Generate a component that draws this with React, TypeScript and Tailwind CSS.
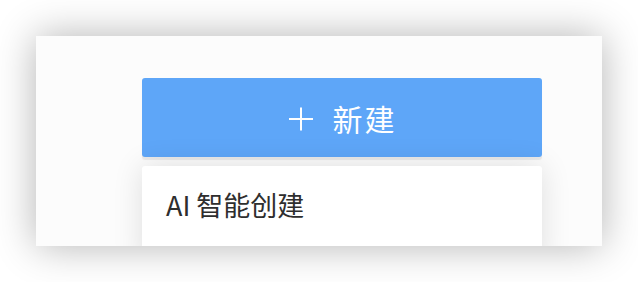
import React from "react";

export default function App() {
  const cjk = { fontFamily: '"Noto Sans CJK SC", "Noto Sans", sans-serif' };
  return (
    <div className="w-[638px] h-[282px] bg-white p-[36px] overflow-hidden" style={cjk}>
      <div className="w-[566px] h-[210px] bg-[#fcfcfc] shadow-[0_0_38px_rgba(0,0,0,0.3)] overflow-hidden pl-[106px] pt-[42px]">
        <div className="w-[400px] h-[79px] bg-[#5ea6f8] rounded-[3px] shadow-[0_3px_1px_rgba(0,0,0,0.07)] flex items-center justify-center text-white">
          <svg width="26" height="26" viewBox="0 0 26 26" className="mr-[19px] mt-[2px]">
            <path d="M13 1.5V24.5M1 13H25" stroke="white" strokeWidth="2" fill="none" />
          </svg>
          <span className="text-[30px] leading-none tracking-[2px]">新建</span>
        </div>
        <div className="mt-[9px] w-[400px] h-[100px] bg-white rounded-t-[3px] shadow-[0_0_30px_rgba(0,0,0,0.12)] pl-[24px] pt-[22px]">
          <span className="text-[27px] leading-[34px] text-[#2e2e2e]">AI 智能创建</span>
        </div>
      </div>
    </div>
  );
}
